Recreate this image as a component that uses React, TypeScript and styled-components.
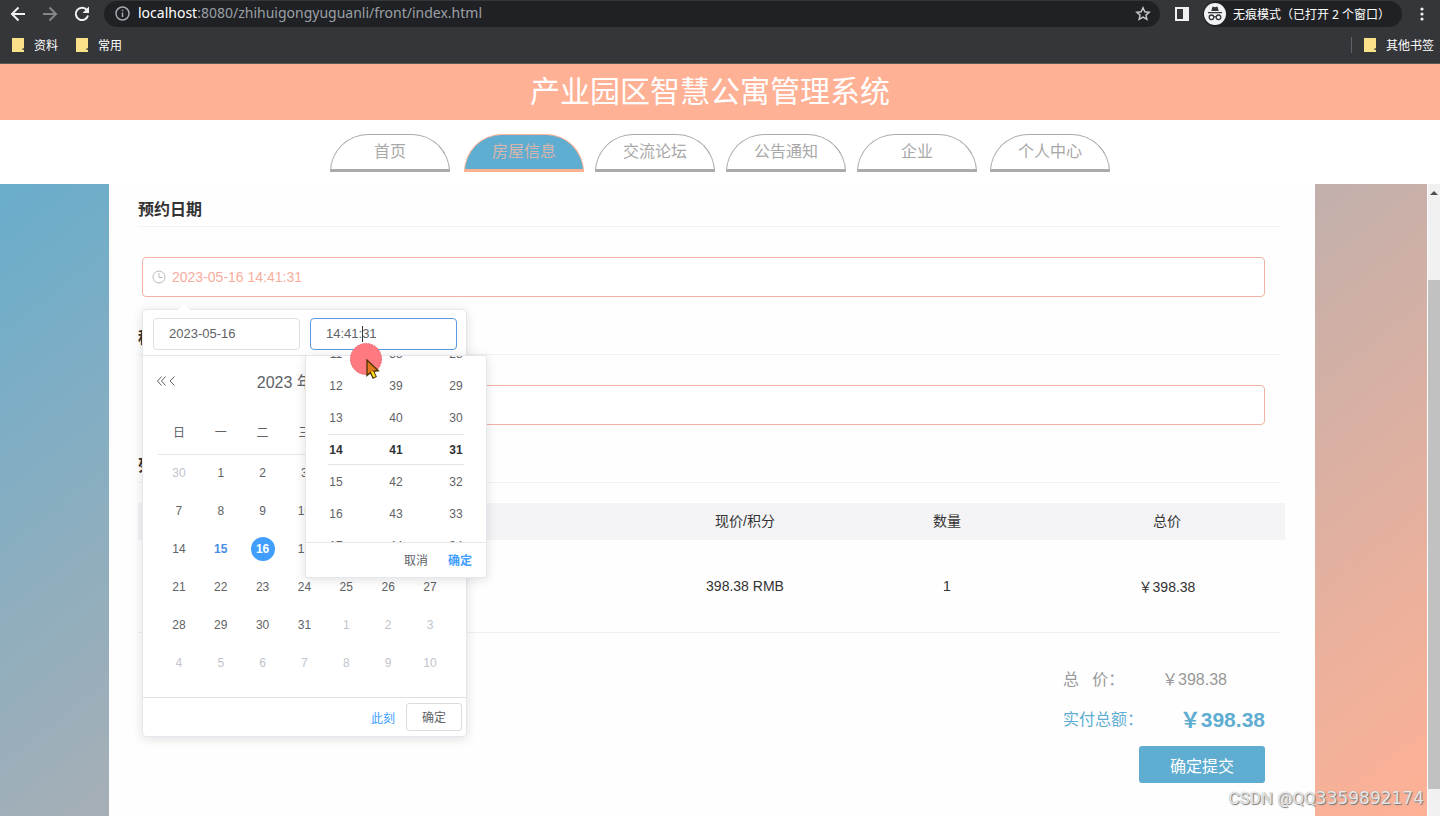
import React from 'react';
import styled, { createGlobalStyle, css } from 'styled-components';

const Global = createGlobalStyle`
  *, *::before, *::after { box-sizing: border-box; }
  body {
    margin: 0;
    background: #fff;
    font-family: "Liberation Sans", "Noto Sans CJK SC", sans-serif;
    font-size: 14px;
    color: #333;
  }
  button, input { font: inherit; color: inherit; }
  button { padding: 0; border: 0; background: none; cursor: pointer; }
`;

const blue = '#5fadd1';
const peach = '#ffb195';
const accent = '#409eff';

const Page = styled.div`
  position: relative;
  display: flex;
  flex-direction: column;
  min-height: 100vh;
`;

/* Browser chrome */

const Chrome = styled.header`
  display: flex;
  flex-direction: column;
  background: #35363a;
  border-bottom: 1px solid #5a5a56;
  color: #fff;
  font-family: "Noto Sans", "Noto Sans CJK SC", sans-serif;
  font-size: 12px;
`;

const Toolbar = styled.div`
  display: flex;
  align-items: center;
  height: 27px;
  padding: 0 8px;
`;

const ToolButtons = styled.div`
  display: flex;
  gap: 12px;
  margin-right: 12px;
`;

const ToolButton = styled.button`
  display: flex;
  align-items: center;
  justify-content: center;
  width: 20px;
  height: 20px;
  color: #f1f1f1;
  &:disabled { color: #85868a; }
`;

const AddressBar = styled.div`
  display: flex;
  flex: 1;
  align-items: center;
  gap: 8px;
  height: 26px;
  padding: 0 9px 0 11px;
  border-radius: 13px;
  background: #202124;
  color: #9aa0a6;
`;

const Url = styled.div`
  flex: 1;
  padding-bottom: 2px;
  font-size: 14px;
  line-height: 24px;
  b { font-weight: 400; color: #fff; }
`;

const SidePanelButton = styled(ToolButton)`
  width: 14px;
  margin: 0 14px 0 15px;
`;

const Incognito = styled.div`
  display: flex;
  align-items: center;
  gap: 7px;
  height: 26px;
  margin-right: 10px;
  padding: 0 12px 0 1px;
  border-radius: 13px;
  background: #202124;
  white-space: nowrap;
`;

const Bookmarks = styled.nav`
  display: flex;
  align-items: center;
  gap: 18px;
  height: 36px;
  padding: 0 6px 0 12px;
`;

const Bookmark = styled.a`
  display: flex;
  align-items: center;
  gap: 10px;
  color: #fff;
  text-decoration: none;
`;

const BookmarkRest = styled.div`
  display: flex;
  align-items: center;
  gap: 12px;
  margin-left: auto;
  &::before {
    content: "";
    width: 1px;
    height: 16px;
    background: #606166;
  }
`;

/* Site header */

const Banner = styled.h1`
  margin: 0;
  padding-right: 20px;
  background: ${peach};
  color: #fff;
  font-size: 30px;
  font-weight: 400;
  line-height: 56px;
  text-align: center;
`;

const Nav = styled.nav`
  display: flex;
  justify-content: center;
  gap: 11px;
  height: 64px;
  padding-top: 14px;
`;

const NavTab = styled.a<{ $active?: boolean }>`
  width: 120px;
  height: 38px;
  border: 1px solid #acaaab;
  border-bottom-width: 3px;
  border-radius: 40px 40px 0 0;
  color: #a8a8a8;
  font-size: 16px;
  line-height: 34px;
  text-align: center;
  text-decoration: none;
  &:first-child { margin-right: 3px; }
  &:last-child { margin-left: 2px; }
  ${(p) => p.$active && css`
    border-color: ${peach};
    background: ${blue};
    color: #d9b5ac;
  `}
`;

/* Page body */

const Body = styled.div`
  display: flex;
  flex: 1;
`;

const Backdrop = styled.div`
  display: flex;
  flex: 1;
  padding: 0 112px 0 109px;
  background: linear-gradient(142deg, #69adcc, #ffb195);
`;

const Panel = styled.main`
  flex: 1;
  padding: 8px 30px 33px 29px;
  background: #fefefe;
`;

const Track = styled.div`
  width: 13px;
  padding-top: 7px;
  border-left: 1px solid #fff;
  background: #f1f1f1;
`;

const TrackArrow = styled.div`
  width: 0;
  margin: 0 auto;
  border: 4px solid transparent;
  border-top: 0;
  border-bottom: 4px solid #505050;
`;

const Thumb = styled.div`
  height: 509px;
  margin-top: 85px;
  background: #c1c1c1;
`;

const Heading = styled.h2`
  height: 35px;
  margin: 0 5px 0 0;
  border-bottom: 1px solid #f3f2f3;
  font-size: 16px;
  font-weight: 700;
  line-height: 36px;
`;

const Field = styled.div`
  position: relative;
  margin: 30px 20px 23px 4px;
`;

const FieldIcon = styled.span`
  position: absolute;
  top: 13px;
  left: 10px;
  display: flex;
`;

const FieldInput = styled.input`
  display: block;
  width: 100%;
  height: 40px;
  padding: 0 29px;
  border: 1px solid #f3b1a6;
  border-radius: 4px;
  background: #fff;
  color: #f8ad9d;
  outline: 0;
`;

const Orders = styled.table`
  width: 100%;
  margin-top: 20px;
  border-collapse: collapse;
  table-layout: fixed;
  th { height: 37px; padding: 0 0 4px; background: #f4f3f5; font-weight: 400; }
  td { height: 92px; padding: 0; text-align: center; }
`;

const Rule = styled.hr`
  margin: 0 5px 0 0;
  border: 0;
  border-top: 1px solid #f1f0f1;
`;

const Totals = styled.dl`
  display: grid;
  grid-template-columns: 99px 103px;
  justify-content: end;
  align-items: center;
  margin: 27px 20px 0 0;
  font-size: 16px;
  line-height: 40px;
  color: #999;
  dt, dd { margin: 0; white-space: pre; }
`;

const GrandLabel = styled.dt`
  color: ${blue};
`;

const GrandTotal = styled.dd`
  color: ${blue};
  font-size: 21px;
  font-weight: 700;
  text-align: right;
`;

const Submit = styled.button`
  display: block;
  width: 126px;
  height: 37px;
  margin: 6px 20px 0 auto;
  border-radius: 3px;
  background: ${blue};
  color: #fff;
  font-size: 16px;
`;

/* Date picker */

const Picker = styled.div`
  position: absolute;
  top: 52px;
  left: 0;
  z-index: 2;
  width: 325px;
  border: 1px solid #e4e7ed;
  border-radius: 4px;
  background: #fff;
  box-shadow: 0 2px 12px rgba(0, 0, 0, 0.12);
  color: #606266;
  font-size: 12px;
`;

const PickerArrow = styled.span`
  position: absolute;
  top: -6px;
  left: 35px;
  border: 6px solid transparent;
  border-top: 0;
  border-bottom-color: #fff;
`;

const PickerInputs = styled.div`
  display: flex;
  gap: 10px;
  padding: 8px 10px 5px;
  border-bottom: 1px solid #e4e4e4;
`;

const SmallInput = styled.input<{ $focused?: boolean }>`
  width: 147px;
  height: 32px;
  padding: 0 15px 2px;
  border: 1px solid ${(p) => (p.$focused ? '#5a9be0' : '#dcdfe6')};
  border-radius: 4px;
  background: #fff;
  font-size: 13px;
  outline: 0;
`;

const MonthBar = styled.div`
  display: flex;
  align-items: center;
  height: 30px;
  margin: 10px 15px 18px 13px;
`;

const ArrowButton = styled.button`
  display: flex;
  width: 11px;
`;

const MonthLabel = styled.div`
  display: flex;
  flex: 1;
  justify-content: center;
  gap: 10px;
  padding-right: 20px;
  font-size: 16px;
`;

const Calendar = styled.table`
  margin: 0 15px;
  border-collapse: collapse;
  th {
    width: 42px;
    height: 40px;
    padding: 0 0 4px;
    border-bottom: 1px solid #e6e6e6;
    font-weight: 400;
  }
  td { height: 38px; padding: 0; text-align: center; }
`;

const Day = styled.button<{ $kind: string }>`
  width: 24px;
  height: 24px;
  border-radius: 12px;
  ${(p) => p.$kind === 'other' && css`color: #c0c4cc;`}
  ${(p) => p.$kind === 'today' && css`color: #4a90e2; font-weight: 700;`}
  ${(p) => p.$kind === 'picked' && css`background: ${accent}; color: #fff; font-weight: 700;`}
`;

const PickerFooter = styled.div`
  display: flex;
  align-items: center;
  justify-content: flex-end;
  gap: 11px;
  height: 39px;
  margin-top: 15px;
  padding-right: 4px;
  border-top: 1px solid #e0e0e0;
`;

const LinkButton = styled.button<{ $primary?: boolean }>`
  color: ${(p) => (p.$primary ? accent : '#606266')};
`;

const PlainButton = styled.button`
  width: 56px;
  height: 28px;
  padding-bottom: 2px;
  border: 1px solid #dcdcdf;
  border-radius: 3px;
`;

const TimePanel = styled.div`
  position: absolute;
  top: 45px;
  left: 162px;
  width: 182px;
  border: 1px solid #e4e7ed;
  border-radius: 2px;
  background: #fff;
  box-shadow: 0 2px 12px rgba(0, 0, 0, 0.12);
`;

const Spinner = styled.div`
  position: relative;
  display: flex;
  align-items: center;
  height: 186px;
  padding-top: 1px;
  overflow: hidden;
  &::after {
    content: "";
    position: absolute;
    top: 78px;
    left: 22px;
    right: 22px;
    height: 31px;
    border: solid #e4e4e4;
    border-width: 1px 0;
  }
`;

const SpinnerColumn = styled.ul`
  flex: 1;
  margin: 0;
  padding: 0;
  list-style: none;
  text-align: center;
`;

const SpinnerItem = styled.li<{ $active: boolean }>`
  line-height: 32px;
  ${(p) => p.$active && css`color: #303133; font-weight: 700;`}
`;

const TimeFooter = styled.div`
  display: flex;
  align-items: center;
  justify-content: flex-end;
  gap: 20px;
  height: 35px;
  padding: 0 14px 2px 0;
  border-top: 1px solid #e8e8e8;
`;

/* Overlays */

const Pointer = styled.svg`
  position: absolute;
  top: 342px;
  left: 349px;
  z-index: 3;
`;

const Caret = styled.span`
  position: absolute;
  top: 16px;
  left: 219px;
  width: 1px;
  height: 16px;
  background: #333;
`;

const Watermark = styled.div`
  position: absolute;
  right: 16px;
  bottom: 6px;
  z-index: 3;
  color: rgba(255, 255, 255, 0.8);
  font-family: Roboto, sans-serif;
  font-size: 17px;
  line-height: 24px;
  text-shadow: 1px 1px 1px #777, 0 0 1px #999;
  span { font-family: "DejaVu Sans", sans-serif; }
`;

const Folder = () => (
  <svg width="12" height="14" viewBox="0 0 12 14" aria-hidden="true">
    <path d="M0 0h12v10.5h-1.5V12H12v2H0z" fill="#fbe08a" />
    <path d="M10.5 10.5H12V12h-1.500z" fill="#6b6340" />
  </svg>
);

const tabs = ['首页', '房屋信息', '交流论坛', '公告通知', '企业', '个人中心'];
const weekdays = ['日', '一', '二', '三', '四', '五', '六'];
const weeks = Array.from({ length: 6 }, (_, w) =>
  Array.from({ length: 7 }, (_, d) => {
    const n = w * 7 + d;
    if (n === 0) return { day: 30, kind: 'other' };
    if (n > 31) return { day: n - 31, kind: 'other' };
    return { day: n, kind: n === 15 ? 'today' : n === 16 ? 'picked' : 'normal' };
  })
);
const spinners = [14, 41, 31].map((v) => [-3, -2, -1, 0, 1, 2, 3].map((o) => v + o));

const DatePicker = () => (
  <Picker>
    <PickerArrow />
    <PickerInputs>
      <SmallInput aria-label="日期" defaultValue="2023-05-16" />
      <SmallInput aria-label="时间" defaultValue="14:41:31" $focused />
      <Caret />
    </PickerInputs>
    <MonthBar>
      <ArrowButton aria-label="前一年">
        <svg width="11" height="10" viewBox="0 0 11 10" fill="none" stroke="#606266">
          <path d="M5.500 .5 1.500 5l4 4.500M9.500 .5 5.500 5l4 4.500" />
        </svg>
      </ArrowButton>
      <ArrowButton aria-label="上个月">
        <svg width="11" height="10" viewBox="0 0 11 10" fill="none" stroke="#606266">
          <path d="M7.500 .5 3 5l4.500 4.500" />
        </svg>
      </ArrowButton>
      <MonthLabel><span>2023 年</span><span>5 月</span></MonthLabel>
    </MonthBar>
    <Calendar>
      <thead>
        <tr>{weekdays.map((d) => <th key={d} scope="col">{d}</th>)}</tr>
      </thead>
      <tbody>
        {weeks.map((week, i) => (
          <tr key={i}>
            {week.map((c, j) => <td key={j}><Day $kind={c.kind}>{c.day}</Day></td>)}
          </tr>
        ))}
      </tbody>
    </Calendar>
    <PickerFooter>
      <LinkButton $primary>此刻</LinkButton>
      <PlainButton>确定</PlainButton>
    </PickerFooter>
    <TimePanel>
      <Spinner>
        {spinners.map((col, i) => (
          <SpinnerColumn key={i}>
            {col.map((n, j) => <SpinnerItem key={n} $active={j === 3}>{n}</SpinnerItem>)}
          </SpinnerColumn>
        ))}
      </Spinner>
      <TimeFooter>
        <LinkButton>取消</LinkButton>
        <LinkButton $primary><b>确定</b></LinkButton>
      </TimeFooter>
    </TimePanel>
  </Picker>
);

const App = () => (
  <>
    <Global />
    <Page>
      <Chrome>
        <Toolbar>
          <ToolButtons>
            <ToolButton aria-label="后退">
              <svg width="16" height="16" viewBox="0 0 16 16" fill="none" stroke="currentColor" strokeWidth="2">
                <path d="M15 8H2.500M8.500 1.500 2 8l6.500 6.500" />
              </svg>
            </ToolButton>
            <ToolButton aria-label="前进" disabled>
              <svg width="16" height="16" viewBox="0 0 16 16" fill="none" stroke="currentColor" strokeWidth="2">
                <path d="M1 8h12.500M7.500 1.500 14 8l-6.500 6.500" />
              </svg>
            </ToolButton>
            <ToolButton aria-label="刷新">
              <svg width="16" height="16" viewBox="0 0 16 16" fill="none" stroke="currentColor" strokeWidth="2">
                <path d="M13 4.200A6.200 6.200 0 1 0 14 9.500" />
                <path d="M15 0.500V7H8.500z" fill="currentColor" stroke="none" />
              </svg>
            </ToolButton>
          </ToolButtons>
          <AddressBar>
            <svg width="15" height="15" viewBox="0 0 15 15" fill="none" stroke="#a5a8ac" strokeWidth="1.500" aria-hidden="true">
              <circle cx="7.500" cy="7.500" r="6.500" />
              <path d="M7.500 6.500V11M7.500 3.800V5.300" />
            </svg>
            <Url><b>localhost</b>:8080/zhihuigongyuguanli/front/index.html</Url>
            <svg width="16" height="16" viewBox="0 0 16 16" fill="none" stroke="#c8cacd" strokeWidth="1.400" aria-hidden="true">
              <path d="m8 1.800 1.800 4 4.400.4-3.300 2.900 1 4.300L8 11.100l-3.900 2.300 1-4.300L1.800 6.200l4.400-.4z" />
            </svg>
          </AddressBar>
          <SidePanelButton aria-label="侧边栏">
            <svg width="14" height="14" viewBox="0 0 14 14">
              <path d="M0 0h14v14H0zM2 2v10h6V2z" fill="#f1f1f1" fillRule="evenodd" />
            </svg>
          </SidePanelButton>
          <Incognito>
            <svg width="22" height="22" viewBox="0 0 22 22" aria-hidden="true">
              <circle cx="11" cy="11" r="11" fill="#f1f3f4" />
              <path d="M7.300 8 8.300 4.200q.3-.8 1.100-.5l1.600.5 1.600-.5q.8-.3 1.100.5L14.700 8zM4 9h14v1.200H4z" fill="#35363a" />
              <g fill="none" stroke="#35363a" strokeWidth="1.300">
                <circle cx="7.500" cy="14.300" r="2.300" />
                <circle cx="14.500" cy="14.300" r="2.300" />
                <path d="M9.800 14q1.200-.8 2.400 0" />
              </g>
            </svg>
            无痕模式（已打开 2 个窗口）
          </Incognito>
          <ToolButton aria-label="更多">
            <svg width="4" height="14" viewBox="0 0 4 14" fill="currentColor">
              <circle cx="2" cy="2" r="1.600" />
              <circle cx="2" cy="7" r="1.600" />
              <circle cx="2" cy="12" r="1.600" />
            </svg>
          </ToolButton>
        </Toolbar>
        <Bookmarks>
          <Bookmark href="#"><Folder />资料</Bookmark>
          <Bookmark href="#"><Folder />常用</Bookmark>
          <BookmarkRest>
            <Bookmark href="#"><Folder />其他书签</Bookmark>
          </BookmarkRest>
        </Bookmarks>
      </Chrome>
      <Banner>产业园区智慧公寓管理系统</Banner>
      <Nav>
        {tabs.map((t, i) => <NavTab key={t} href="#" $active={i === 1}>{t}</NavTab>)}
      </Nav>
      <Body>
        <Backdrop>
          <Panel>
            <Heading>预约日期</Heading>
            <Field>
              <FieldIcon>
                <svg width="14" height="14" viewBox="0 0 14 14" fill="none" stroke="#b9bbc0" aria-hidden="true">
                  <circle cx="7" cy="7" r="6" />
                  <path d="M7 3v4.500h3.500" />
                </svg>
              </FieldIcon>
              <FieldInput aria-label="预约日期" defaultValue="2023-05-16 14:41:31" />
              <DatePicker />
            </Field>
            <Heading>租赁时长</Heading>
            <Field>
              <FieldInput aria-label="租赁时长" />
            </Field>
            <Heading>列表</Heading>
            <Orders>
              <colgroup>
                <col />
                <col width="200" />
                <col width="204" />
                <col width="236" />
              </colgroup>
              <thead>
                <tr>
                  <th />
                  <th scope="col">现价/积分</th>
                  <th scope="col">数量</th>
                  <th scope="col">总价</th>
                </tr>
              </thead>
              <tbody>
                <tr>
                  <td />
                  <td>398.38 RMB</td>
                  <td>1</td>
                  <td>￥398.38</td>
                </tr>
              </tbody>
            </Orders>
            <Rule />
            <Totals>
              <dt>总{'\u00a0\u00a0\u00a0'}价：</dt>
              <dd>￥398.38</dd>
              <GrandLabel>实付总额：</GrandLabel>
              <GrandTotal>￥398.38</GrandTotal>
            </Totals>
            <Submit>确定提交</Submit>
          </Panel>
        </Backdrop>
        <Track>
          <TrackArrow />
          <Thumb />
        </Track>
      </Body>
      <Pointer width="34" height="38" viewBox="0 0 34 38" aria-hidden="true">
        <circle cx="17" cy="17" r="15.500" fill="#ff7a80" stroke="#e8606a" strokeDasharray="2 1" />
        <path d="M18 18v15.500l3.500-3 2.600 5.500 3-1.500-2.600-5.200 4.800-.6z" fill="#e07a1c" stroke="#4a3200" strokeWidth="1.300" />
        <path d="m22 30 2.500 5.500 2.200-1.200-2.500-5z" fill="#f5e020" />
      </Pointer>
      <Watermark>CSDN @QQ<span>3359892174</span></Watermark>
    </Page>
  </>
);

export default App;
